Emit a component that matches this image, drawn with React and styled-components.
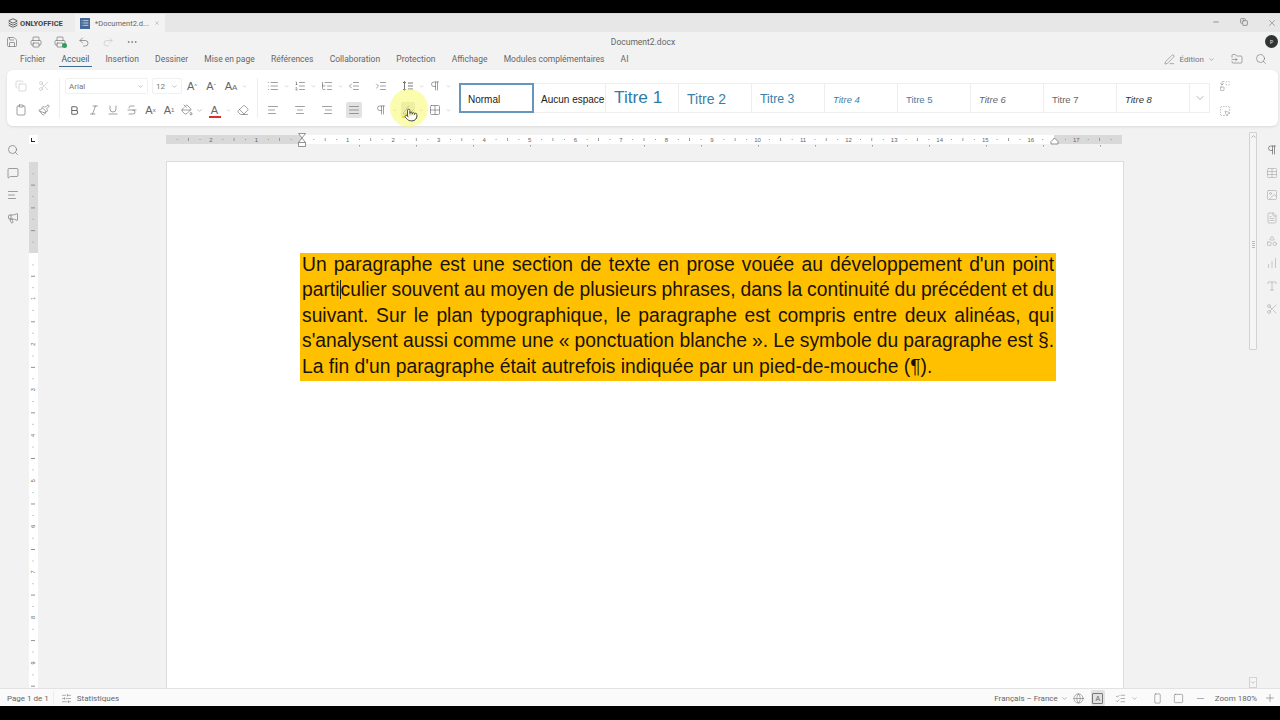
import styled, { createGlobalStyle } from "styled-components";
import {
  AlignCenter, AlignJustify, AlignLeft, AlignRight, Bold, ChevronDown, Copy, Clipboard, Eraser, Ellipsis,
  FileText, FolderInput, Globe, Grid2x2, Image, IndentDecrease, IndentIncrease, Italic, Layers, List,
  ListOrdered, ListTree, Megaphone, MessageSquare, Minus, Paintbrush, PaintBucket, Pilcrow, Plus,
  Pointer, Printer, Redo2, Save, Scissors, Search, Shapes, Square, Strikethrough, Table,
  Type, Underline, Undo2, X, ChartNoAxesColumnIncreasing, SquareDashedMousePointer,
  PenLine, ListChecks, RectangleVertical, ChevronUp, Replace, TextAlignStart, Highlighter, SlidersHorizontal
} from "lucide-react";

const GlobalStyle = createGlobalStyle`
  html, body { margin: 0; height: 720px; overflow: hidden; background: #000; }
  body { font-family: Roboto, "Noto Sans", sans-serif; }
`;

const App_ = styled.div`
  width: 1280px;
  height: 720px;
  display: flex;
  flex-direction: column;
  background: #000;
`;
const Letterbox = styled.div`
  height: ${(p) => p.$h}px;
  flex: none;
`;
const Window = styled.div`
  height: 693px;
  display: flex;
  flex-direction: column;
  background: #f2f2f2;
  color: #666;
  font-size: 8.5px;
`;

const TabStrip = styled.div`
  height: 19px;
  display: flex;
  align-items: center;
  background: #e7e7e7;
  border-top: 1px solid #ddd;
  box-sizing: border-box;
`;
const AppTab = styled.div`
  width: 75px;
  height: 100%;
  display: flex;
  align-items: center;
  gap: 2px;
  padding-left: 8px;
  box-sizing: border-box;
  font-size: 7.5px;
  font-weight: 700;
  color: #444;
  background: #ececec;
`;
const DocTab = styled.div`
  width: 90px;
  height: 100%;
  display: flex;
  align-items: center;
  padding: 0 5px;
  gap: 5px;
  box-sizing: border-box;
  background: #f3f3f3;
  font-size: 7.5px;
  color: #666;
`;
const DocBadge = styled.span`
  width: 10px;
  height: 11px;
  background: #44689a;
  color: #fff;
  display: flex;
  align-items: center;
  justify-content: center;
  flex: none;
`;
const WinControls = styled.div`
  margin-left: auto;
  display: flex;
`;
const WinButton = styled.span`
  width: 28px;
  display: flex;
  justify-content: center;
  color: #666;
  &:last-child { margin-right: -6px; }
`;

const QuickRow = styled.div`
  height: 19px;
  display: grid;
  grid-template-columns: 606px 74px 1fr;
  align-items: center;
`;
const QuickTools = styled.div`
  display: flex;
  align-items: center;
`;
const DocTitle = styled.div`
  text-align: center;
  white-space: nowrap;
  font-size: 8.5px;
  color: #666;
`;
const Avatar = styled.span`
  width: 13px;
  height: 13px;
  border-radius: 50%;
  background: #333;
  color: #eee;
  font-size: 5px;
  display: flex;
  align-items: center;
  justify-content: center;
  margin-left: auto;
  margin-right: 2px;
`;
const ReadyDot = styled.i`
  position: absolute !important;
  left: 14px;
  top: 9px;
  width: 5px;
  height: 5px;
  border-radius: 50%;
  background: #2e9e5b;
`;

const MenuRow = styled.div`
  height: 19px;
  display: flex;
  align-items: center;
  gap: 16.2px;
  padding: 0 13px 3px 20px;
  box-sizing: border-box;
`;
const MenuTab = styled.span`
  position: relative;
  white-space: nowrap;
  color: ${(p) => (p.$active ? "#3d5a72" : "#666")};
  &::after {
    content: "";
    display: ${(p) => (p.$active ? "block" : "none")};
    position: absolute;
    left: -3px;
    right: -3px;
    bottom: -3px;
    height: 1.5px;
    background: #3e6a8c;
  }
`;
const MenuRight = styled.div`
  margin-left: auto;
  display: flex;
  align-items: center;
  gap: 4px;
`;
const ModeText = styled.span`
  font-size: 8px;
  color: #777;
  margin-left: 1px;
`;
const MenuIcon = styled.span`
  display: flex;
  margin-left: ${(p) => p.$gap || 0}px;
`;

const Ribbon = styled.div`
  position: relative;
  height: 56px;
  margin: 0 2px 0 7px;
  display: flex;
  align-items: center;
  background: #fff;
  border-radius: 6px;
  box-shadow: 0 1px 3px rgba(0, 0, 0, 0.1);
  flex: none;
`;
const ToolGroup = styled.div`
  display: flex;
  flex-direction: column;
  gap: 8px;
  margin-left: ${(p) => p.$ml || 0}px;
`;
const ToolRow = styled.div`
  display: flex;
  align-items: center;
  height: 16px;
`;
const ListGrid = styled.div`
  display: grid;
  grid-template-columns: repeat(7, 27px);
  row-gap: 8px;
  margin-left: 4px;
`;
const Slot = styled.div`
  display: flex;
  align-items: center;
  height: 16px;
`;
const Divider = styled.div`
  width: 1px;
  height: 40px;
  background: #eee;
  margin-left: ${(p) => p.$ml || 0}px;
`;
const Tool = styled.span`
  width: ${(p) => p.$w || 22}px;
  height: 16px;
  flex: none;
  margin-right: ${(p) => p.$mr || 0}px;
  display: flex;
  align-items: center;
  justify-content: center;
  position: relative;
  color: ${(p) => (p.$off ? "#c4c4c4" : "#666")};
  font-family: "Liberation Sans", Arial, sans-serif;
  font-size: 11px;
  &::before {
    content: "";
    display: ${(p) => (p.$active ? "block" : "none")};
    position: absolute;
    inset: 0 ${(p) => p.$inset ?? 3}px;
    background: #e2e2e2;
    border-radius: 2px;
    z-index: 0;
  }
  & > * { position: relative; }
`;
const Caret = styled.span`
  width: ${(p) => p.$w || 5}px;
  flex: none;
  display: flex;
  justify-content: center;
  color: #777;
  margin-right: ${(p) => p.$mr || 0}px;
`;
const Small = styled.sup`
  font-size: 6px;
  line-height: 0;
  vertical-align: ${(p) => (p.$down ? "-3px" : "4px")};
`;
const CaseLetter = styled.span`
  font-size: 8px;
`;
const ColorBar = styled.i`
  position: absolute !important;
  left: 50%;
  margin-left: -6px;
  bottom: 0;
  width: 12px;
  height: 2px;
  background: ${(p) => p.$c};
`;
const FontBox = styled.div`
  width: ${(p) => p.$w}px;
  height: 16px;
  margin-right: ${(p) => p.$mr || 0}px;
  padding: 0 3px;
  box-sizing: border-box;
  display: flex;
  align-items: center;
  justify-content: space-between;
  border: 1px solid #f0f0f0;
  border-radius: 2px;
  font-size: 8px;
  color: #777;
  flex: none;
`;

const Gallery = styled.div`
  display: flex;
  margin: -1px 0 0 9px;
  height: 30px;
  border: 1px solid #eee;
  border-left: none;
  box-sizing: border-box;
`;
const StyleItem = styled.div`
  width: 73px;
  box-sizing: border-box;
  display: flex;
  align-items: center;
  padding: ${(p) => p.$top || 0}px 0 0 8px;
  overflow: hidden;
  white-space: nowrap;
  font-family: "Liberation Sans", Arial, sans-serif;
  font-size: ${(p) => p.$size}px;
  font-style: ${(p) => (p.$italic ? "italic" : "normal")};
  color: ${(p) => p.$color};
  border-right: 1px solid #eee;
  outline: ${(p) => (p.$selected ? "2px solid #6796bd" : "none")};
  outline-offset: -1px;
`;
const GalleryMore = styled.div`
  width: 19px;
  display: flex;
  align-items: center;
  justify-content: center;
  color: #777;
`;
const SideTools = styled.div`
  display: flex;
  flex-direction: column;
  gap: 13px;
  margin-left: 9px;
  color: #888;
`;
const CursorGlow = styled.div`
  position: absolute;
  left: 383px;
  top: 19px;
  width: 38px;
  height: 38px;
  border-radius: 50%;
  background: rgba(250, 250, 110, 0.55);
  pointer-events: none;
`;
const CursorHand = styled.div`
  position: absolute;
  left: 397px;
  top: 38px;
  display: flex;
  color: #333;
`;

const Workspace = styled.div`
  flex: 1;
  min-height: 0;
  display: flex;
`;
const Rail = styled.div`
  flex: none;
  display: flex;
  flex-direction: column;
  align-items: center;
  gap: 8.7px;
  color: ${(p) => p.$color || "#666"};
  width: ${(p) => p.$w}px;
  padding: 17px 0 0 ${(p) => p.$pl || 0}px;
  box-sizing: border-box;
`;
const RailIcon = styled.span`
  height: 14px;
  display: flex;
  align-items: center;
  color: ${(p) => p.$c || "inherit"};
`;
const VRulerColumn = styled.div`
  width: 14px;
  flex: none;
  display: flex;
  flex-direction: column;
  align-items: center;
  padding-top: 9px;
  box-sizing: border-box;
`;
const TabStop = styled.div`
  width: 9px;
  height: 9px;
  background: #fff;
  margin-bottom: 18px;
  flex: none;
  display: flex;
  align-items: center;
  justify-content: center;
  &::after {
    content: "";
    width: 3px;
    height: 3px;
    border-left: 1.5px solid #222;
    border-bottom: 1.5px solid #222;
  }
`;
const Canvas = styled.div`
  flex: none;
  width: 1209px;
  padding: 5px 0 0 126px;
  box-sizing: border-box;
  display: flex;
  flex-direction: column;
`;
const Page = styled.div`
  flex: 1;
  width: 958px;
  margin-top: 10px;
  padding: 91px 0 0 133px;
  box-sizing: border-box;
  background: #fff;
  border: 1px solid #dcdcdc;
  border-bottom: none;
`;
const Paragraph = styled.div`
  width: 756px;
  height: 128px;
  box-sizing: border-box;
  padding: 0 2px;
  background: #ffc000;
  font-family: "Liberation Sans", Arial, sans-serif;
  font-size: 19.3px;
  line-height: 25.4px;
  color: #1a1206;
`;
const Line = styled.div`
  text-align: justify;
  text-align-last: ${(p) => (p.$last ? "left" : "justify")};
  word-spacing: ${(p) => (p.$tight ? "-2.5px" : "0")};
  position: relative;
  top: -1px;
`;
const TextCursor = styled.span`
  display: inline-block;
  width: 0;
  height: 19px;
  border-left: 1px solid #222;
  vertical-align: -3px;
`;
const ScrollColumn = styled.div`
  width: 8px;
  flex: none;
  margin-top: 6px;
  display: flex;
  flex-direction: column;
  justify-content: space-between;
  align-items: stretch;
`;
const ScrollThumb = styled.div`
  height: 218px;
  border: 1px solid #d2d2d2;
  border-radius: 1px;
  box-sizing: border-box;
  background: #f5f5f5;
  display: flex;
  flex-direction: column;
  align-items: center;
  color: #888;
`;
const Grip = styled.span`
  width: 3px;
  height: 8px;
  margin-top: 101px;
  background: repeating-linear-gradient(#bbb 0 1px, transparent 1px 2px);
`;
const ScrollEnd = styled.span`
  height: 9px;
  display: flex;
  justify-content: center;
  align-items: center;
  border: 1px solid #d2d2d2;
  color: #888;
  background: #f5f5f5;
`;

const StatusBar = styled.div`
  height: 18px;
  flex: none;
  display: flex;
  align-items: center;
  background: #fafafa;
  border-top: 1px solid #e2e2e2;
  box-sizing: border-box;
  padding: 1px 0 0 7px;
  font-size: 8px;
  color: #666;
`;
const StatusDivider = styled.span`
  width: 1px;
  height: 14px;
  background: #eee;
  margin: 0 ${(p) => p.$r || 0}px 0 ${(p) => p.$l || 0}px;
`;
const StatusRight = styled.div`
  margin-left: auto;
  display: flex;
  align-items: center;
`;
const StatusText = styled.span`
  white-space: nowrap;
  margin: 0 ${(p) => p.$r || 0}px 0 ${(p) => p.$l || 0}px;
`;
const SpellBox = styled.span`
  width: 9px;
  height: 9px;
  border: 1px solid #777;
  border-radius: 1px;
  font-size: 7px;
  line-height: 9px;
  text-align: center;
`;

const PX_PER_CM = 45.55;

const HRuler = () => {
  const zero = 136;
  const cells = [];
  for (let q = -11; q <= 71; q++) {
    const x = zero + (q / 4) * PX_PER_CM;
    if (q === 0) continue;
    if (q % 4 === 0) {
      cells.push(
        <text key={q} x={x} y={11} fontSize="6" fill="#666" textAnchor="middle" fontFamily="Liberation Sans">
          {Math.abs(q / 4)}
        </text>
      );
    } else if (q % 2 === 0) {
      cells.push(<rect key={q} x={x} y={7} width="0.8" height="3" fill="#888" />);
    } else {
      cells.push(<rect key={q} x={x} y={8} width="1" height="1" fill="#999" />);
    }
  }
  const tabs = Array.from({ length: 15 }, (_, i) => zero + 57 * (i + 1));
  return (
    <svg width="958" height="20" style={{ display: "block", flex: "none" }}>
      <rect x="0" y="4" width="956" height="9" fill="#fff" />
      <rect x="0" y="4" width="136" height="9" fill="#d9d9d9" />
      <rect x="888" y="4" width="68" height="9" fill="#d9d9d9" />
      {cells}
      {tabs.map((x) => (
        <rect key={x} x={x} y={14} width="1" height="1.5" fill="#999" />
      ))}
      <path d="M132.5 2.5h7l-3.5 4.5z M136 7l3.5 4.5v4h-7v-4z M132.5 11.5h7" fill="#fff" stroke="#777" strokeWidth="0.8" />
      <path d="M888 9.5l3.5 -3.5l3.5 3.5v2.5h-7z" transform="translate(-3 1)" fill="#fff" stroke="#777" strokeWidth="0.8" />
    </svg>
  );
};

const VRuler = () => {
  const zero = 91;
  const cells = [];
  for (let q = -7; q <= 38; q++) {
    const y = zero + (q / 4) * PX_PER_CM;
    if (q === 0) continue;
    if (q % 4 === 0 && q > 0) {
      cells.push(
        <text key={q} x={0} y={0} fontSize="5.5" fill="#666" textAnchor="middle" fontFamily="Liberation Sans"
          transform={`translate(6 ${y}) rotate(-90)`}>
          {q / 4}
        </text>
      );
    } else if (q % 2 === 0) {
      cells.push(<rect key={q} x={2} y={y} width="4" height="0.9" fill="#888" />);
    } else {
      cells.push(<rect key={q} x={3.5} y={y} width="1" height="1" fill="#999" />);
    }
  }
  return (
    <svg width="9" height="526" style={{ display: "block", flex: "none" }}>
      <rect width="9" height="526" fill="#fff" />
      <rect width="9" height="91" fill="#d9d9d9" />
      {cells}
    </svg>
  );
};

const LineSpacing = ({ size = 12 }) => (
  <svg width={size} height={size} viewBox="0 0 12 12" fill="none" stroke="currentColor" strokeWidth="0.9">
    <path d="M2.5 1.5v9M1 3l1.5-1.5L4 3M1 9l1.5 1.5L4 9M6 3h5M6 6h5M6 9h5" />
  </svg>
);

const I = ({ as: Icon, s = 12 }) => <Icon size={s} strokeWidth={1.25} />;
const Down = ({ w, mr }) => (
  <Caret $w={w} $mr={mr}>
    <ChevronDown size={7} strokeWidth={1.5} />
  </Caret>
);

const menu = ["Fichier", "Accueil", "Insertion", "Dessiner", "Mise en page", "Références", "Collaboration", "Protection", "Affichage", "Modules complémentaires", "AI"];

const gallery = [
  { name: "Normal", size: 10, color: "#222", selected: true, top: 4 },
  { name: "Aucun espace", size: 10, color: "#222", top: 4 },
  { name: "Titre 1", size: 17.3, color: "#2f7bab" },
  { name: "Titre 2", size: 14, color: "#3a7fa8", top: 2 },
  { name: "Titre 3", size: 12.3, color: "#3a7fa8", top: 2 },
  { name: "Titre 4", size: 9.5, color: "#3f7ea6", italic: true, top: 4 },
  { name: "Titre 5", size: 9.5, color: "#3f7ea6", top: 4 },
  { name: "Titre 6", size: 9.5, color: "#666", italic: true, top: 4 },
  { name: "Titre 7", size: 9.5, color: "#666", top: 4 },
  { name: "Titre 8", size: 9.5, color: "#333", italic: true, top: 4 },
];

const listRow = [
  { icon: List, caret: true },
  { icon: ListOrdered, caret: true },
  { icon: ListTree, caret: true },
  { icon: IndentDecrease },
  { icon: IndentIncrease },
  { icon: LineSpacing, caret: true },
  { icon: Pilcrow, caret: true },
];

const alignRow = [
  { icon: AlignLeft },
  { icon: AlignCenter },
  { icon: AlignRight },
  { icon: AlignJustify, active: true },
  { icon: Pilcrow, caret: true },
  { icon: Highlighter, caret: true, active: true, bar: "#f0b400", inset: 4 },
  { icon: Grid2x2, caret: true },
];

const leftRail = [Search, MessageSquare, TextAlignStart, Megaphone];
const rightRail = [Pilcrow, Table, Image, FileText, Shapes, ChartNoAxesColumnIncreasing, Type, Scissors];

export default function App() {
  return (
    <App_>
      <GlobalStyle />
      <Letterbox $h={13} />
      <Window>
        <TabStrip>
          <AppTab>
            <Layers size={10} strokeWidth={2} />
            ONLYOFFICE
          </AppTab>
          <DocTab>
            <DocBadge><List size={8} strokeWidth={2} /></DocBadge>
            <span>*Document2.d...</span>
            <X size={8} strokeWidth={1.2} />
          </DocTab>
          <WinControls>
            <WinButton><Minus size={8} /></WinButton>
            <WinButton><Copy size={8} /></WinButton>
            <WinButton><X size={10} strokeWidth={1.2} /></WinButton>
          </WinControls>
        </TabStrip>

        <QuickRow>
          <QuickTools>
            <Tool $w={24}><I as={Save} /></Tool>
            <Tool $w={24}><I as={Printer} /></Tool>
            <Tool $w={24}><I as={Printer} /><ReadyDot /></Tool>
            <Tool $w={24}><I as={Undo2} /></Tool>
            <Tool $w={24} $off><I as={Redo2} /></Tool>
            <Tool $w={24}><I as={Ellipsis} /></Tool>
          </QuickTools>
          <DocTitle>Document2.docx</DocTitle>
          <Avatar>P</Avatar>
        </QuickRow>

        <MenuRow>
          {menu.map((m) => (
            <MenuTab key={m} $active={m === "Accueil"}>{m}</MenuTab>
          ))}
          <MenuRight>
            <PenLine size={11} strokeWidth={1.1} />
            <ModeText>Édition</ModeText>
            <ChevronDown size={7} strokeWidth={1.5} />
            <MenuIcon $gap={12}><FolderInput size={12} strokeWidth={1.1} /></MenuIcon>
            <MenuIcon $gap={8}><Search size={12} strokeWidth={1.1} /></MenuIcon>
          </MenuRight>
        </MenuRow>

        <Ribbon>
          <ToolGroup $ml={6}>
            <ToolRow>
              <Tool $w={16} $mr={7} $off><I as={Copy} /></Tool>
              <Tool $w={16} $off><I as={Scissors} /></Tool>
            </ToolRow>
            <ToolRow>
              <Tool $w={16} $mr={7}><I as={Clipboard} /></Tool>
              <Tool $w={16}><I as={Paintbrush} /></Tool>
            </ToolRow>
          </ToolGroup>
          <Divider $ml={7} />
          <ToolGroup $ml={5}>
            <ToolRow>
              <FontBox $w={83} $mr={4}>Arial<ChevronDown size={7} strokeWidth={1.5} /></FontBox>
              <FontBox $w={30}>12<ChevronDown size={7} strokeWidth={1.5} /></FontBox>
              <Tool $w={20}>A<Small>^</Small></Tool>
              <Tool $w={18}>A<Small>ˇ</Small></Tool>
              <Tool $w={22}><span>A<CaseLetter>A</CaseLetter></span></Tool>
              <Down />
            </ToolRow>
            <ToolRow>
              <Tool $w={19}><Bold size={11} strokeWidth={2.2} /></Tool>
              <Tool $w={19}><I as={Italic} /></Tool>
              <Tool $w={19}><I as={Underline} /></Tool>
              <Tool $w={19}><I as={Strikethrough} /></Tool>
              <Tool $w={19}>A<Small>x</Small></Tool>
              <Tool $w={18}>A<Small $down>1</Small></Tool>
              <Tool $w={18}><I as={PaintBucket} /></Tool>
              <Down w={7} />
              <Tool $w={23}>A<ColorBar $c="#d93025" /></Tool>
              <Down />
              <Tool $w={24}><I as={Eraser} /></Tool>
            </ToolRow>
          </ToolGroup>
          <Divider $ml={2} />
          <ListGrid>
            {listRow.map((t, i) => (
              <Slot key={i}>
                <Tool $w={22}><I as={t.icon} /></Tool>
                {t.caret && <Down />}
              </Slot>
            ))}
            {alignRow.map((t, i) => (
              <Slot key={i}>
                <Tool $w={22} $active={t.active} $inset={t.inset}>
                  <I as={t.icon} />
                  {t.bar && <ColorBar $c={t.bar} />}
                </Tool>
                {t.caret && <Down />}
              </Slot>
            ))}
          </ListGrid>
          <Gallery>
            {gallery.map((g) => (
              <StyleItem key={g.name} $size={g.size} $color={g.color} $italic={g.italic} $selected={g.selected} $top={g.top}>
                {g.name}
              </StyleItem>
            ))}
            <GalleryMore><ChevronDown size={12} strokeWidth={1.1} /></GalleryMore>
          </Gallery>
          <SideTools>
            <Replace size={12} strokeWidth={1.1} />
            <SquareDashedMousePointer size={12} strokeWidth={1.1} />
          </SideTools>
          <CursorGlow />
          <CursorHand><Pointer size={14} strokeWidth={1.4} fill="#fff" /></CursorHand>
        </Ribbon>

        <Workspace>
          <Rail $w={26}>
            {leftRail.map((Icon, i) => (
              <RailIcon key={i}><I as={Icon} /></RailIcon>
            ))}
          </Rail>
          <VRulerColumn>
            <TabStop />
            <VRuler />
          </VRulerColumn>
          <Canvas>
            <HRuler />
            <Page>
              <Paragraph>
                <Line>Un paragraphe est une section de texte en prose vouée au développement d'un point</Line>
                <Line $tight>parti<TextCursor />culier souvent au moyen de plusieurs phrases, dans la continuité du précédent et du</Line>
                <Line>suivant. Sur le plan typographique, le paragraphe est compris entre deux alinéas, qui</Line>
                <Line $tight>s'analysent aussi comme une « ponctuation blanche ». Le symbole du paragraphe est §.</Line>
                <Line $last>La fin d'un paragraphe était autrefois indiquée par un pied-de-mouche (¶).</Line>
              </Paragraph>
            </Page>
          </Canvas>
          <ScrollColumn>
            <ScrollThumb>
              <ChevronUp size={7} strokeWidth={2} />
              <Grip />
            </ScrollThumb>
            <ScrollEnd><ChevronDown size={7} strokeWidth={2} /></ScrollEnd>
          </ScrollColumn>
          <Rail $w={23} $pl={7} $color="#aaa">
            {rightRail.map((Icon, i) => (
              <RailIcon key={i} $c={i === 0 ? "#555" : undefined}><I as={Icon} /></RailIcon>
            ))}
          </Rail>
        </Workspace>

        <StatusBar>
          <StatusText>Page 1 de 1</StatusText>
          <StatusDivider $l={4} $r={7} />
          <SlidersHorizontal size={11} strokeWidth={1.1} />
          <StatusText $l={5}>Statistiques</StatusText>
          <StatusRight>
            <StatusText $r={3}>Français – France</StatusText>
            <ChevronDown size={7} strokeWidth={1.5} />
            <Tool $w={22}><Globe size={11} strokeWidth={1.1} /></Tool>
            <Tool $w={16} $mr={5} $active $inset={1}><SpellBox>A</SpellBox></Tool>
            <Tool $w={20}><ListChecks size={11} strokeWidth={1.1} /></Tool>
            <Down w={7} mr={7} />
            <Tool $w={26}><RectangleVertical size={11} strokeWidth={1.1} /></Tool>
            <Tool $w={16}><Square size={11} strokeWidth={1.1} /></Tool>
            <Tool $w={28}><Minus size={11} strokeWidth={1.1} /></Tool>
            <StatusText $r={3}>Zoom 180%</StatusText>
            <Tool $w={20}><Plus size={12} strokeWidth={1.1} /></Tool>
          </StatusRight>
        </StatusBar>
      </Window>
      <Letterbox $h={14} />
    </App_>
  );
}
